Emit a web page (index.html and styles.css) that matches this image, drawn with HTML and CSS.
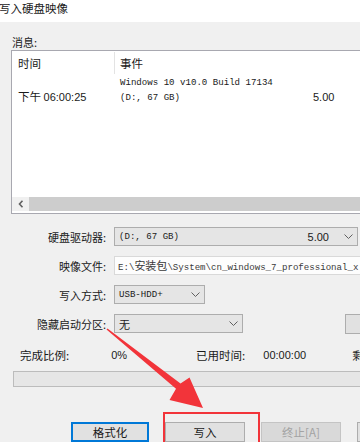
FILE: index.html
```html
<!DOCTYPE html>
<html lang="zh-CN">
<head>
  <meta charset="UTF-8" />
  <meta name="viewport" content="width=device-width, initial-scale=1.0" />
  <title>写入硬盘映像</title>
  <link rel="stylesheet" href="styles.css">
</head>
<body>
  <div class="titlebar"><span class="title">写入硬盘映像</span></div>

  <div class="dialog">
    <div class="msg-label">消息:</div>

    <div class="listbox">
      <div class="list-head">
        <div class="col-time">时间</div>
        <div class="col-event">事件</div>
      </div>
      <div class="list-row">
        <div class="col-time">下午 <span class="num">06:00:25</span></div>
        <div class="col-event mono">
          <div>Windows 10 v10.0 Build 17134</div>
          <div>(D:, 67 GB)</div>
        </div>
        <div class="col-value num">5.00</div>
      </div>
      <div class="hscroll">
        <span class="scroll-btn">
          <svg width="6" height="8" viewBox="0 0 6 8"><path d="M4.5 0.8 L1.5 4 L4.5 7.2" fill="none" stroke="#606060" stroke-width="1.6"/></svg>
        </span>
        <div class="scroll-thumb"></div>
      </div>
    </div>

    <div class="form">
      <div class="form-row">
        <label>硬盘驱动器:</label>
        <div class="combo combo-drive">
          <span class="mono">(D:, 67 GB)</span>
          <span class="num combo-size">5.00</span>
          <svg class="chev" width="9" height="5" viewBox="0 0 9 5"><path d="M0.5 0.5 L4.5 4.5 L8.5 0.5" fill="none" stroke="#606060" stroke-width="1"/></svg>
        </div>
      </div>
      <div class="form-row">
        <label>映像文件:</label>
        <div class="textbox mono">E:\<span class="cjk">安装包</span>\System\cn_windows_7_professional_x</div>
      </div>
      <div class="form-row">
        <label>写入方式:</label>
        <div class="combo combo-mode">
          <span class="mono">USB-HDD+</span>
          <svg class="chev" width="9" height="5" viewBox="0 0 9 5"><path d="M0.5 0.5 L4.5 4.5 L8.5 0.5" fill="none" stroke="#606060" stroke-width="1"/></svg>
        </div>
      </div>
      <div class="form-row">
        <label>隐藏启动分区:</label>
        <div class="combo combo-hide">
          <span>无</span>
          <svg class="chev" width="9" height="5" viewBox="0 0 9 5"><path d="M0.5 0.5 L4.5 4.5 L8.5 0.5" fill="none" stroke="#606060" stroke-width="1"/></svg>
        </div>
        <button class="btn side-btn"></button>
      </div>
    </div>

    <div class="progress-info">
      <span class="pi-label">完成比例:</span>
      <span class="num pi-pct">0%</span>
      <span class="pi-label pi-elapsed">已用时间:</span>
      <span class="num pi-time">00:00:00</span>
      <span class="pi-label pi-remain">剩</span>
    </div>
    <div class="progress-bar"></div>

    <div class="buttons">
      <button class="btn btn-default">格式化</button>
      <button class="btn">写入</button>
      <button class="btn btn-disabled">终止[A]</button>
      <button class="btn btn-cut"></button>
    </div>

    <!-- tutorial markup drawn over the dialog -->
    <svg class="annot" width="360" height="442" viewBox="0 0 360 442">
      <polygon points="106.5,329.6 107.5,328.4 180.5,383.6 189.5,377.5 203,408 169.5,400 176,388.8" fill="#f2343a"/>
      <rect x="164" y="413" width="95" height="32" fill="none" stroke="#f2343a" stroke-width="2"/>
    </svg>
  </div>
</body>
</html>
```

FILE: styles.css
```css
html, body {
  margin: 0;
  padding: 0;
  width: 360px;
  height: 442px;
  overflow: hidden;
}
body {
  font-family: "Noto Sans CJK SC", "Liberation Sans", sans-serif;
  font-size: 11px;
  color: #1a1a1a;
  background: #f0f0f0;
  position: relative;
}
.num {
  font-family: "Liberation Sans", "Noto Sans CJK SC", sans-serif;
  font-size: 11px;
}
.mono {
  font-family: "Liberation Mono", "DejaVu Sans Mono", "Noto Sans CJK SC", monospace;
  font-size: 9.1px;
}
.cjk {
  font-family: "Noto Sans CJK SC", sans-serif;
  font-size: 11px;
}
.titlebar {
  height: 22px;
  background: #fff;
}
.title {
  display: block;
  line-height: 16px;
  margin-left: -1px;
  font-size: 11.5px;
}
.dialog {
  padding: 0 0 0 11px;
}
.msg-label {
  line-height: 14px;
  padding-top: 13px;
  margin-left: 1px;
}
.listbox {
  margin-top: 1px;
  width: 370px;
  height: 162px;
  background: #fff;
  border: 1px solid #a8a8b0;
  display: flex;
  flex-direction: column;
}
.list-head {
  display: flex;
  height: 24px;
  align-items: center;
}
.list-head .col-time {
  width: 96px;
  padding-left: 6px;
  font-size: 11.5px;
}
.list-head .col-event {
  border-left: 1px solid #e3e3e3;
  height: 22px;
  line-height: 22px;
  padding-left: 5px;
  font-size: 11.5px;
}
.list-row {
  display: flex;
  align-items: flex-end;
}
.list-row .col-time {
  width: 97px;
  padding-left: 6px;
  line-height: 15px;
  font-size: 11.5px;
}
.list-row .col-event {
  width: 193px;
  padding-left: 5px;
  line-height: 15px;
  white-space: nowrap;
}
.list-row .col-value {
  line-height: 15px;
}
.hscroll {
  margin-top: auto;
  margin-bottom: 2px;
  height: 14px;
  display: flex;
  background: #f0f0f0;
}
.scroll-btn {
  width: 17px;
  display: flex;
  align-items: center;
  justify-content: center;
}
.scroll-thumb {
  flex: 1;
  background: #cdcdcd;
}
.form {
  margin-top: 13px;
  margin-left: -11px;
  display: flex;
  flex-direction: column;
  gap: 10px;
}
.form-row {
  display: flex;
  align-items: center;
  height: 19px;
}
.form-row > * {
  flex-shrink: 0;
}
.form-row label {
  width: 106px;
  text-align: right;
  margin-right: 8px;
  font-size: 11px;
  white-space: nowrap;
}
.combo {
  height: 17px;
  background: #e5e5e5;
  border: 1px solid #adadad;
  display: flex;
  align-items: center;
  padding-left: 4px;
  box-sizing: content-box;
}
.combo .chev {
  margin-left: auto;
  margin-right: 4px;
}
.combo-drive {
  width: 238px;
}
.combo-size {
  margin-left: auto;
  margin-right: 15px;
}
.combo-drive .chev {
  margin-left: 0;
}
.combo-mode {
  width: 85px;
}
.combo-hide {
  width: 123px;
}
.textbox {
  height: 17px;
  line-height: 17px;
  width: 260px;
  background: #fdfdfd;
  border: 1px solid #d9d9d9;
  padding-left: 3px;
  white-space: nowrap;
  overflow: hidden;
  color: #3a3a3a;
}
.side-btn {
  margin-left: 102px;
  width: 30px;
  height: 20px;
}
.progress-info {
  margin-top: 12px;
  margin-left: 9px;
  display: flex;
  align-items: center;
  height: 20px;
  white-space: nowrap;
}
.pi-label {
  font-size: 11.5px;
}
.pi-pct {
  margin-left: 42px;
}
.pi-elapsed {
  margin-left: 69px;
}
.pi-time {
  margin-left: 18px;
}
.pi-remain {
  margin-left: 46px;
}
.progress-bar {
  margin-top: 6px;
  margin-left: 2px;
  width: 360px;
  height: 14px;
  background: #e6e6e6;
  border: 1px solid #bcbcbc;
}
.buttons {
  margin-top: 35px;
  margin-left: 60px;
  display: flex;
  gap: 16px;
  white-space: nowrap;
}
.btn {
  font-family: "Noto Sans CJK SC", sans-serif;
  font-size: 11.5px;
  width: 80px;
  height: 20px;
  padding: 0;
  line-height: 16px;
  background: #e1e1e1;
  border: 1px solid #adadad;
  color: #1a1a1a;
  flex-shrink: 0;
}
.btn-default {
  width: 78px;
  border: 2px solid #0078d7;
}
.btn-disabled {
  background: #d9d9d9;
  border-color: #c4c4c4;
  color: #a3a3a3;
}
.annot {
  position: absolute;
  left: 0;
  top: 0;
  pointer-events: none;
}
```
